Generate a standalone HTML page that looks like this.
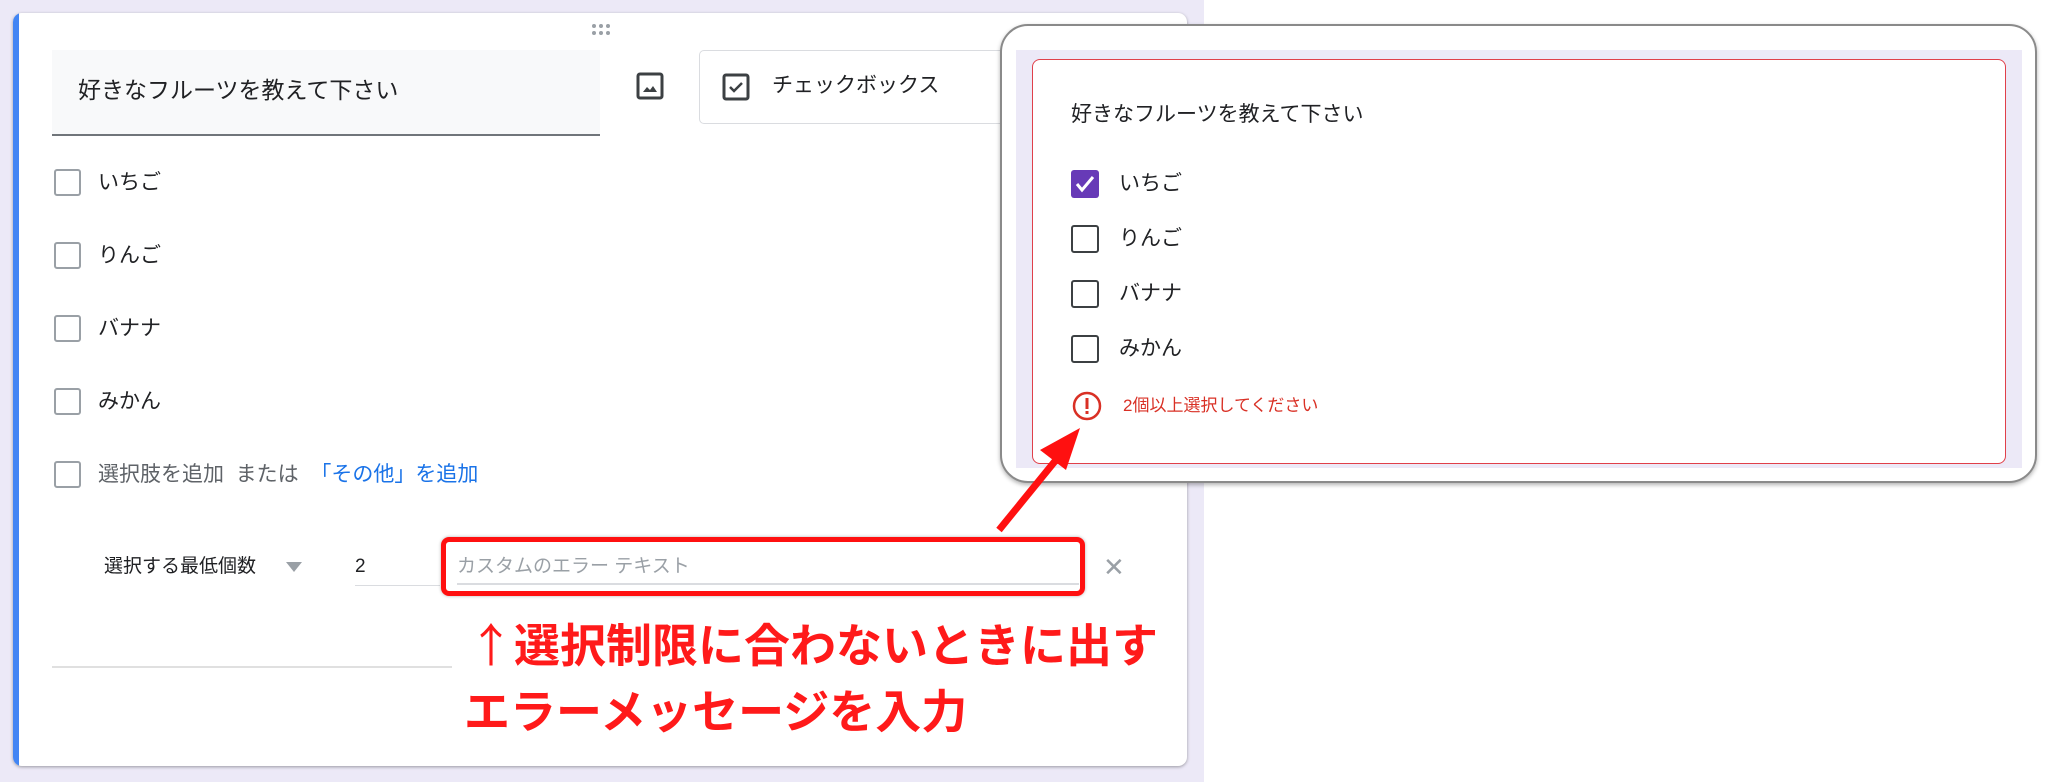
<!DOCTYPE html>
<html><head><meta charset="utf-8"><style>
*{margin:0;padding:0;box-sizing:border-box}
body{width:2048px;height:782px;position:relative;overflow:hidden;background:#fff;font-family:"Liberation Sans","Noto Sans CJK JP",sans-serif;color:#202124}
.abs{position:absolute}
.cb{position:absolute;width:27px;height:27px;border:2px solid #9aa0a6;border-radius:3px;background:#fff}
.opt{position:absolute;font-size:21px;color:#202124;line-height:1}
.pcb{position:absolute;width:28px;height:28px;border:2.5px solid #3c4043;border-radius:3px}
.popt{position:absolute;font-size:21px;color:#202124;line-height:1}
</style></head><body>
<div class="abs" style="left:0;top:0;width:1204px;height:782px;background:#ece9f7"></div>
<div class="abs" style="left:13px;top:13px;width:1174px;height:753px;background:#fff;border-radius:9px;box-shadow:0 1px 3px rgba(0,0,0,.35);overflow:hidden">
  <div class="abs" style="left:0;top:0;width:6px;height:100%;background:#4285f4"></div>
</div>
<svg class="abs" style="left:590px;top:22px" width="24" height="16"><g fill="#9aa0a6"><circle cx="4" cy="4" r="2"/><circle cx="11" cy="4" r="2"/><circle cx="18" cy="4" r="2"/><circle cx="4" cy="11" r="2"/><circle cx="11" cy="11" r="2"/><circle cx="18" cy="11" r="2"/></g></svg>
<div class="abs" style="left:52px;top:50px;width:548px;height:86px;background:#f8f9fa;border-bottom:2px solid #70757a"></div>
<div class="abs" style="left:78px;top:76px;font-size:23px;line-height:28px">好きなフルーツを教えて下さい</div>
<svg class="abs" style="left:636px;top:72px" width="28" height="28" viewBox="0 0 28 28"><rect x="2" y="2" width="24" height="24" rx="2" fill="none" stroke="#3c4043" stroke-width="3"/><path d="M7 20l4-5 3 3 3-4 4 6z" fill="#3c4043"/></svg>
<div class="abs" style="left:699px;top:50px;width:330px;height:74px;border:1px solid #dadce0;border-radius:5px;background:#fff"></div>
<svg class="abs" style="left:722px;top:73px" width="28" height="28" viewBox="0 0 28 28"><rect x="2" y="2" width="24" height="24" rx="2" fill="none" stroke="#3c4043" stroke-width="3"/><path d="M8 14l4 4 8-8" fill="none" stroke="#3c4043" stroke-width="2.5"/></svg>
<div class="abs" style="left:772px;top:73px;font-size:21px;line-height:26px;color:#202124">チェックボックス</div>

<div class="cb" style="left:54px;top:169px"></div><div class="opt" style="left:98px;top:172px">いちご</div>
<div class="cb" style="left:54px;top:242px"></div><div class="opt" style="left:98px;top:245px">りんご</div>
<div class="cb" style="left:54px;top:315px"></div><div class="opt" style="left:98px;top:318px">バナナ</div>
<div class="cb" style="left:54px;top:388px"></div><div class="opt" style="left:98px;top:391px">みかん</div>
<div class="cb" style="left:54px;top:461px"></div><div class="opt" style="left:98px;top:464px;color:#5f6368">選択肢を追加&nbsp; または&nbsp; <span style="color:#1a73e8">「その他」を追加</span></div>

<div class="abs" style="left:104px;top:556px;font-size:19px;line-height:22px">選択する最低個数</div>
<div class="abs" style="left:286px;top:562px;width:0;height:0;border-left:8px solid transparent;border-right:8px solid transparent;border-top:10px solid #9aa0a6"></div>
<div class="abs" style="left:355px;top:556px;font-size:19px;line-height:22px">2</div>
<div class="abs" style="left:355px;top:585px;width:85px;height:1px;background:#dadce0"></div>
<div class="abs" style="left:441px;top:537px;width:644px;height:59px;border:5px solid #ff1010;border-radius:8px;box-shadow:0 0 3px rgba(0,0,0,.3)"></div>
<div class="abs" style="left:457px;top:556px;font-size:19px;line-height:22px;color:#9aa0a6">カスタムのエラー テキスト</div>
<div class="abs" style="left:457px;top:583px;width:622px;height:2px;background:#dadce0"></div>
<div class="abs" style="left:1103px;top:552px;font-size:26px;color:#9aa0a6">✕</div>
<div class="abs" style="left:52px;top:666px;width:400px;height:2px;background:#e0e0e0"></div>

<div class="abs" style="left:468px;top:616px;font-size:46px;font-weight:bold;color:#ff1a1a;line-height:54px;white-space:nowrap"><span style="font-family:'Noto Sans CJK JP',sans-serif;font-weight:normal">↑</span>選択制限に合わないときに出す</div>
<div class="abs" style="left:464px;top:685px;font-size:46px;font-weight:bold;color:#ff1a1a;line-height:54px;white-space:nowrap">エラーメッセージを入力</div>

<div class="abs" style="left:1000px;top:24px;width:1037px;height:459px;background:#fff;border:2px solid #8a8a8a;border-radius:28px;box-shadow:0 2px 4px rgba(0,0,0,.3)"></div>
<div class="abs" style="left:1016px;top:50px;width:1006px;height:418px;background:#ece9f7"></div>
<div class="abs" style="left:1032px;top:59px;width:974px;height:405px;background:#fff;border:1.5px solid #e0404a;border-radius:8px"></div>
<div class="abs" style="left:1071px;top:102px;font-size:21px;line-height:26px">好きなフルーツを教えて下さい</div>
<div class="abs" style="left:1071px;top:170px;width:28px;height:28px;background:#673ab7;border-radius:3px"></div>
<svg class="abs" style="left:1071px;top:170px" width="28" height="28"><path d="M6 14l5 6 11-13" fill="none" stroke="#fff" stroke-width="3"/></svg>
<div class="popt" style="left:1119px;top:173px">いちご</div>
<div class="pcb" style="left:1071px;top:225px"></div><div class="popt" style="left:1119px;top:228px">りんご</div>
<div class="pcb" style="left:1071px;top:280px"></div><div class="popt" style="left:1119px;top:283px">バナナ</div>
<div class="pcb" style="left:1071px;top:335px"></div><div class="popt" style="left:1119px;top:338px">みかん</div>
<svg class="abs" style="left:1071px;top:390px" width="32" height="32"><circle cx="16" cy="16" r="13" fill="none" stroke="#d93025" stroke-width="2.5"/><rect x="14.5" y="8" width="3" height="11" fill="#d93025"/><rect x="14.5" y="21" width="3" height="3" fill="#d93025"/></svg>
<div class="abs" style="left:1123px;top:396px;font-size:17px;line-height:20px;color:#d93025">2個以上選択してください</div>

<svg class="abs" style="left:0;top:0" width="2048" height="782"><line x1="999" y1="530" x2="1060" y2="455" stroke="#ff1010" stroke-width="7"/><path d="M1080 428l-40 22 26 20z" fill="#ff1010"/></svg>
</body></html>
